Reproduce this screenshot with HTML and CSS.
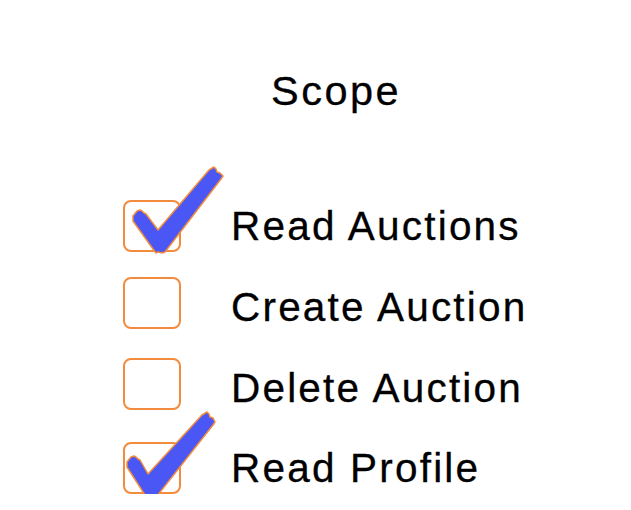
FILE: index.html
```html
<!DOCTYPE html>
<html lang="en">
<head>
<meta charset="utf-8">
<title>Scope</title>
<link rel="stylesheet" href="styles.css">
</head>
<body>
<main class="scope">
  <h1 class="scope-title">Scope</h1>
  <ul class="scope-list">
    <li class="scope-item">
      <span class="box">
        <svg class="check" viewBox="0 0 110 100" width="110" height="100" aria-hidden="true">
          <path d="M10,56 L14,51 L17,50 L19,51 L21,53 L23,54 L35,70 L86,10 L91,7 L93,9 L94,12 L97,13 L100,16 L98,19 L42,92 L39,93 L35,92 L33,93 L30,89 L10,61 Z"/>
        </svg>
      </span>
      <span class="label">Read Auctions</span>
    </li>
    <li class="scope-item">
      <span class="box box-raised"></span>
      <span class="label">Create Auction</span>
    </li>
    <li class="scope-item">
      <span class="box box-raised"></span>
      <span class="label">Delete Auction</span>
    </li>
    <li class="scope-item">
      <span class="box">
        <svg class="check" viewBox="0 0 110 100" width="110" height="100" aria-hidden="true">
          <path d="M4,60 L8,55 L11,54 L13,55 L15,57 L17,58 L25,72 L79,13 L84,10 L86,12 L87,15 L90,16 L92,20 L90,23 L34,94 L31,96 L27,95 L25,96 L22,93 L4,65 Z"/>
        </svg>
      </span>
      <span class="label">Read Profile</span>
    </li>
  </ul>
</main>
</body>
</html>
```

FILE: styles.css
```css
html, body {
  margin: 0;
  padding: 0;
  background: #ffffff;
}

body {
  margin: 8px;
  font-family: "Liberation Sans", Arial, Helvetica, sans-serif;
  color: #000000;
}

.scope {
  display: flex;
  flex-direction: column;
}

.scope-title {
  margin: 60px 0 0 0;
  padding-left: 263px;
  font-size: 41.5px;
  font-weight: normal;
  line-height: 46px;
  letter-spacing: 2.5px;
  -webkit-text-stroke: 0.3px #000;
}

.scope-list {
  list-style: none;
  margin: 86px 0 0 0;
  padding: 0 0 0 115px;
  display: flex;
  flex-direction: column;
  gap: 28.8px;
}

.scope-item {
  display: flex;
  align-items: center;
  gap: 50px;
  height: 52px;
}

.box {
  position: relative;
  flex: none;
  width: 58px;
  height: 52px;
  box-sizing: border-box;
  border: 2px solid #f28c3c;
  border-radius: 8px;
}

.box-raised {
  margin-bottom: 7px;
}

.check {
  position: absolute;
  left: -2px;
  top: -42px;
  overflow: visible;
}

.check path {
  fill: #4b57f4;
  stroke: #f28c3c;
  stroke-width: 1.5;
  stroke-linejoin: round;
}

.label {
  font-size: 40.5px;
  line-height: 46px;
  letter-spacing: 2.2px;
  -webkit-text-stroke: 0.3px #000;
}
```
